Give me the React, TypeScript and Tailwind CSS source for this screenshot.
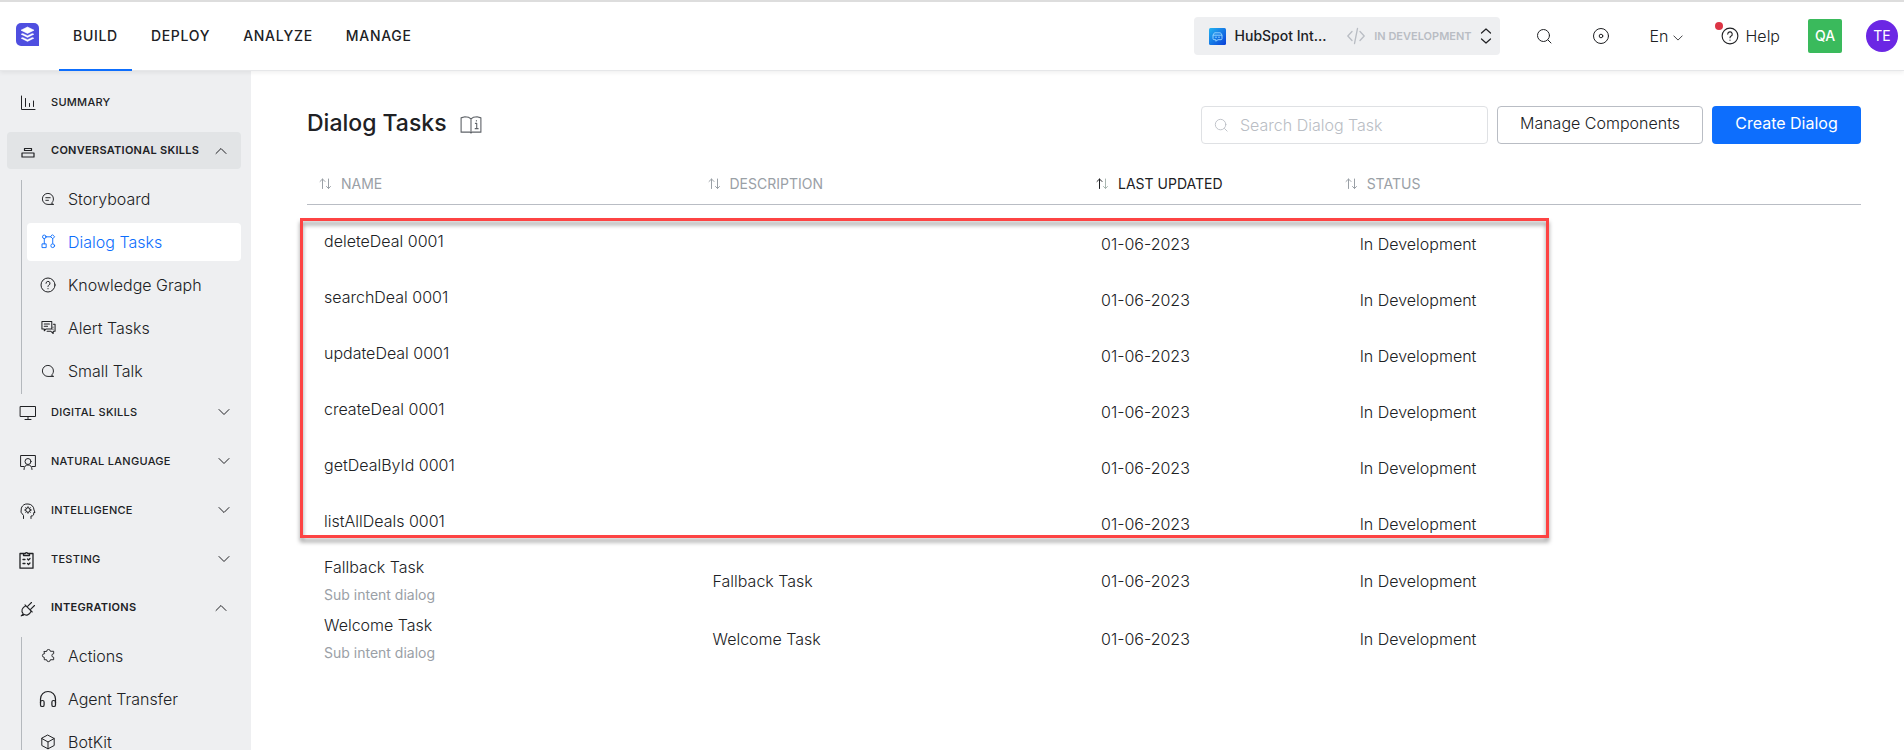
import React from "react";

type IconProps = { className?: string };

function Svg({
  className = "",
  box = 16,
  width = 1,
  children,
}: {
  className?: string;
  box?: number;
  width?: number;
  children: React.ReactNode;
}) {
  return (
    <svg
      className={`shrink-0 ${className}`}
      viewBox={`0 0 ${box} ${box}`}
      fill="none"
      stroke="currentColor"
      strokeWidth={width}
      strokeLinecap="round"
      strokeLinejoin="round"
      aria-hidden="true"
    >
      {children}
    </svg>
  );
}

const Logo = () => (
  <svg className="size-[23px] shrink-0" viewBox="0 0 23 23" aria-hidden="true">
    <path d="M5 0h13a5 5 0 0 1 5 5v17.500a.5.5 0 0 1-.5.500H5a5 5 0 0 1-5-5V5a5 5 0 0 1 5-5z" fill="#4f4fe0" />
    <path d="M11.500 4 18 7.200l-6.500 3.200L5 7.200z" fill="#fff" stroke="#fff" strokeWidth="0.6" strokeLinejoin="round" />
    <path d="m5 11.200 1.700-.8 4.800 2.300 4.800-2.300 1.700.8-6.500 3.200z" fill="#fff" stroke="#fff" strokeWidth="0.4" strokeLinejoin="round" />
    <path d="m5 15.200 1.700-.8 4.800 2.300 4.800-2.300 1.700.8-6.500 3.200z" fill="#fff" stroke="#fff" strokeWidth="0.4" strokeLinejoin="round" />
  </svg>
);

const SearchIcon = ({ className }: IconProps) => (
  <Svg className={className}>
    <circle cx="7.500" cy="7.500" r="6" />
    <path d="m12 12 3 3" />
  </Svg>
);

const ChevronIcon = ({ className }: IconProps) => (
  <Svg className={className} box={12}>
    <path d="m1 3.500 5 5 5-5" />
  </Svg>
);

const HelpIcon = ({ className }: IconProps) => (
  <Svg className={className}>
    <circle cx="8" cy="8" r="7" />
    <path d="M6 6.300a2 2 0 1 1 2.800 1.900c-.6.300-.8.600-.8 1.300M8 11.500v.3" />
  </Svg>
);

const SummaryIcon = () => (
  <Svg className="size-4">
    <path d="M1.500 1v13.500H15M5.500 3.500v8M9.500 8.500v3M13.500 6v5.500" />
  </Svg>
);

const SkillsIcon = () => (
  <Svg className="size-4" width={1.2}>
    <path d="M4.500 4.500h7v2h-7zM2 9h12v4H2z" />
  </Svg>
);

const MonitorIcon = () => (
  <Svg className="size-[18px]" box={18}>
    <path d="M1.500 2.500h15v10h-15zM9 12.500v2.500M6 15.500h6" />
  </Svg>
);

const LanguageIcon = () => (
  <Svg className="size-4">
    <path d="M4 12.500H.6V1.500h14.800v11H12" />
    <circle cx="8" cy="7.500" r="3" />
    <path d="M4 15.500c0-3 1.500-4.500 4-4.500s4 1.500 4 4.500" />
  </Svg>
);

const IntelligenceIcon = () => (
  <Svg className="size-4">
    <path d="M3.500 15.500v-3A6.400 6.400 0 0 1 8 1a6 6 0 0 1 6 6l1 2.500h-1.200c0 2.500-.3 3.500-2.800 3.500v2.500" />
    <circle cx="8" cy="7" r="2.300" />
    <path d="M8 3.700v1M8 9.300v1M4.700 7h1M10.300 7h1M5.700 4.700l.6.600M10.300 4.700l-.6.600M5.700 9.300l.6-.6M10.300 9.300l-.6-.6" />
  </Svg>
);

const TestingIcon = () => (
  <Svg className="-ml-[3px] size-[18px]" box={18} width={1.3}>
    <path d="M5.500 2.500H2v14.700h13V2.500h-3.500M5.500 4.500v-2h1.800a1.300 1.300 0 0 1 2.400 0h1.800v2z" />
    <path d="M5 8.500h2M5 12.500h2M9.500 8l1 1 1.500-1.500M9.500 12.500l1 1 1.500-1.500" />
  </Svg>
);

const PlugIcon = () => (
  <Svg className="size-4" width={1.1}>
    <path d="m5 3.800 7.200 7.200M6 4.800C1.800 6.500.8 10 3.200 12.800c2.800 2.400 6.300 1.400 8-2.800M3.200 12.800l-2 2M1.500 14.500h1.800M7.800 5.200l3.700-3.700M10.800 8.200l3.700-3.700" />
  </Svg>
);

const StoryboardIcon = () => (
  <Svg className="size-3.5" width={1.1}>
    <path d="M14 14.200H8A6.300 6.300 0 1 1 14.200 8c0 2-.8 3.500-2 4.600zM5.500 6.500h5M5.500 9.500h3" />
  </Svg>
);

const FlowIcon = () => (
  <Svg className="size-[15px]">
    <circle cx="3.500" cy="3" r="1.900" />
    <path d="m12.500 1 2 2-2 2-2-2zM5.500 3h5M3.500 5v5.500M12.500 5v5M1.500 10.500h4v4h-4z" />
    <circle cx="12.500" cy="12.500" r="2" />
  </Svg>
);

const AlertIcon = () => (
  <Svg className="size-[15px]" width={1.1}>
    <path d="M1 1.500h10.500v8H5.500L3.500 11.500v-2H1zM3.500 4.200h5.500M3.500 6.700h3.500" />
    <path d="M13.200 4.500H15v7.500h-2v2.500L10.500 12h-4" />
    <path d="M12.800 7.500v.1M12.800 9.700v.1" />
  </Svg>
);

const TalkIcon = () => (
  <Svg className="size-3.5" width={1.1}>
    <path d="M14 14.200H8A6.300 6.300 0 1 1 14.200 8c0 2-.8 3.500-2 4.600z" />
  </Svg>
);

const PuzzleIcon = () => (
  <Svg className="size-[15px]">
    <path d="M3.500 3.700H6a2 2 0 0 1 4-.2h3.500v2.600a1.900 1.900 0 0 0 0 3.800v2.600H10a2 2 0 0 1-4 0H3.500V10a2 2 0 0 1 0-4z" />
  </Svg>
);

const HeadsetIcon = () => (
  <Svg className="size-[18px]" box={18} width={1.2}>
    <path d="M1.500 13V9a7.500 7.500 0 0 1 15 0v4" />
    <rect x="1.500" y="10.500" width="3.600" height="6" rx="1.600" />
    <rect x="12.900" y="10.500" width="3.600" height="6" rx="1.600" />
  </Svg>
);

const CubeIcon = () => (
  <Svg className="size-4">
    <path d="m8 1.200 6.200 3.300v7L8 14.800l-6.200-3.300v-7zM1.800 4.500 8 8l6.200-3.500M8 8v6.800" />
  </Svg>
);

const BookIcon = () => (
  <Svg className="size-[22px] text-[#5f6368]" box={20}>
    <path d="M10 4.500C8.500 2.800 6.500 2.500 4.500 2.500L1 3.500v13h8l1 .8 1-.8h8v-13l-3.500-1c-2 0-4 .3-5.500 2v12.300" />
    <path d="M14 8.500h1.200v4.700M13.800 13.300h2.700M14.900 5.900v.4" />
  </Svg>
);

function SortIcon({ active }: { active?: boolean }) {
  return (
    <svg
      className="h-3 w-[13px] shrink-0"
      viewBox="0 0 13 12"
      fill="none"
      strokeLinecap="round"
      strokeLinejoin="round"
      aria-hidden="true"
    >
      <path d="M3.500 10.500v-9.500M1 3.500 3.500 1 6 3.500" stroke={active ? "#202124" : "#9aa0a6"} />
      <path d="M9.500 1v9.500M7.500 8.500l2 2 2-2" stroke={active ? "#a9b5b0" : "#9aa0a6"} />
    </svg>
  );
}

function Section({
  icon,
  label,
  open,
  collapsible = true,
  active,
}: {
  icon: React.ReactNode;
  label: string;
  open?: boolean;
  collapsible?: boolean;
  active?: boolean;
}) {
  return (
    <button
      type="button"
      aria-expanded={collapsible ? !!open : undefined}
      className={`flex h-[37px] w-full items-center rounded-[4px] pr-3.5 text-left ${active ? "bg-[#e2e4e6]" : ""}`}
    >
      <span className="flex w-11 shrink-0 justify-start pl-3">
        <span className="flex w-[18px] justify-center pt-0.5">{icon}</span>
      </span>
      <span
        className={`flex-1 text-[11px] leading-4 tracking-wide whitespace-nowrap ${
          open ? "pb-0.5 font-semibold" : "font-medium"
        }`}
      >
        {label}
      </span>
      {collapsible && <ChevronIcon className={open ? "size-3 rotate-180" : "-mr-[3px] size-3"} />}
    </button>
  );
}

function SubList({ items }: { items: { label: string; icon: React.ReactNode; active?: boolean }[] }) {
  return (
    <ul className="-mt-px ml-3.5 flex flex-col gap-[5px] border-l border-[#b4b8bd] pb-1 pl-[5px]">
      {items.map((item) => (
        <li key={item.label}>
          <a
            href="#"
            aria-current={item.active ? "page" : undefined}
            className={`flex h-[38px] items-center gap-[11px] rounded-[4px] pb-px pl-3 text-base leading-4 font-light ${
              item.active ? "bg-white text-[#0d6efd]" : ""
            }`}
          >
            <span className="flex w-[18px] justify-center">{item.icon}</span>
            <span>{item.label}</span>
          </a>
        </li>
      ))}
    </ul>
  );
}

const skills = [
  { label: "Storyboard", icon: <StoryboardIcon /> },
  { label: "Dialog Tasks", icon: <FlowIcon />, active: true },
  { label: "Knowledge Graph", icon: <HelpIcon className="size-4" /> },
  { label: "Alert Tasks", icon: <AlertIcon /> },
  { label: "Small Talk", icon: <TalkIcon /> },
];

const integrations = [
  { label: "Actions", icon: <PuzzleIcon /> },
  { label: "Agent Transfer", icon: <HeadsetIcon /> },
  { label: "BotKit", icon: <CubeIcon /> },
];

const tasks: { name: string; note?: string; description?: string }[] = [
  { name: "deleteDeal 0001" },
  { name: "searchDeal 0001" },
  { name: "updateDeal 0001" },
  { name: "createDeal 0001" },
  { name: "getDealById 0001" },
  { name: "listAllDeals 0001" },
  { name: "Fallback Task", note: "Sub intent dialog", description: "Fallback Task" },
  { name: "Welcome Task", note: "Sub intent dialog", description: "Welcome Task" },
];

const columns = [
  { label: "NAME", width: "w-1/4" },
  { label: "DESCRIPTION", width: "w-1/4" },
  { label: "LAST UPDATED", width: "w-[16%]", active: true },
  { label: "STATUS", width: "" },
];

function Header() {
  return (
    <header className="relative z-10 flex h-[71px] shrink-0 items-stretch border-t-2 border-b border-t-[#dddddd] border-b-[#e6e7e9] bg-white pr-1.5 pl-4 shadow-[0_2px_4px_rgba(0,0,0,0.06)]">
      <a href="#" aria-label="Home" className="mr-5 flex items-center pb-1">
        <Logo />
      </a>
      <nav className="-mb-px flex items-stretch gap-[5px]">
        {["BUILD", "DEPLOY", "ANALYZE", "MANAGE"].map((label, i) => (
          <a
            key={label}
            href="#"
            className={`flex items-center border-b-2 px-3.5 text-sm font-medium tracking-wider ${
              i === 0 ? "border-[#0d6efd]" : "border-transparent"
            }`}
          >
            {label}
          </a>
        ))}
      </nav>
      <div className="ml-auto flex items-center">
        <button type="button" className="flex h-[38px] w-[306px] items-center rounded-[4px] bg-[#eeeff1] pr-1.5 pl-[15px]">
          <svg className="size-[17px] shrink-0" viewBox="0 0 17 17" aria-hidden="true">
            <defs>
              <linearGradient id="bot" x1="0" y1="0" x2="1" y2="1">
                <stop offset="0" stopColor="#22b4f2" />
                <stop offset="1" stopColor="#0a3fd8" />
              </linearGradient>
            </defs>
            <rect width="17" height="17" rx="1.500" fill="url(#bot)" />
            <path d="M5.500 4.800h6L13 7v3.700a1 1 0 0 1-1 1H9l-2.200 1.500v-1.500H5a1 1 0 0 1-1-1V7z" fill="none" stroke="#8fd0ff" strokeLinejoin="round" />
            <path d="M4 7.200h9" stroke="#8fd0ff" />
            <circle cx="7" cy="9.300" r=".8" fill="#8fd0ff" />
            <circle cx="10" cy="9.300" r=".8" fill="#8fd0ff" />
          </svg>
          <span className="ml-[9px] text-sm font-medium">HubSpot Int...</span>
          <span className="ml-auto flex items-center text-[#b9bdc4]">
            <Svg className="size-[18px]" box={18} width={1.3}>
              <path d="M5 4.500.8 9 5 13.500M13 4.500 17.200 9 13 13.500M10.500 1.500l-3 15" />
            </Svg>
            <span className="ml-[9px] text-[11px] font-semibold">IN DEVELOPMENT</span>
          </span>
          <Svg className="ml-1.5 size-4" width={1.2}>
            <path d="m3.500 5 4.500-4 4.500 4M3.500 11l4.500 4 4.500-4" />
          </Svg>
        </button>
        <button type="button" aria-label="Search" className="ml-9">
          <SearchIcon className="size-4" />
        </button>
        <button type="button" aria-label="Walkthrough" className="ml-10">
          <Svg className="size-[18px]" box={18}>
            <circle cx="9" cy="9" r="7.500" />
            <circle cx="9" cy="9" r="1.800" />
          </Svg>
        </button>
        <button type="button" className="ml-10 flex items-center gap-1 text-base font-light">
          En
          <ChevronIcon className="mt-1 size-2.5" />
        </button>
        <button type="button" className="relative ml-[38px] flex items-center gap-[7px] text-base font-light">
          <HelpIcon className="size-[18px]" />
          Help
          <span className="absolute -top-0.5 -left-1.5 size-2 rounded-full bg-[#dc3545]" />
        </button>
        <button type="button" className="ml-7 size-[34px] rounded-[2px] bg-[#3aba5c] text-sm font-medium text-white">
          QA
        </button>
        <button type="button" className="ml-6 size-8 rounded-full bg-[#6b27e4] text-sm text-white">
          TE
        </button>
      </div>
    </header>
  );
}

export default function App() {
  return (
    <div className="flex h-screen flex-col overflow-hidden bg-white font-['Inter',sans-serif] text-[#202124]">
      <Header />
      <div className="flex min-h-0 flex-1">
        <aside className="w-[251px] shrink-0 overflow-hidden bg-[#eeeff1] pt-3 pr-2.5 pl-[7px]">
          <nav className="flex flex-col gap-3">
            <Section icon={<SummaryIcon />} label="SUMMARY" collapsible={false} />
            <Section icon={<SkillsIcon />} label="CONVERSATIONAL SKILLS" open active />
            <SubList items={skills} />
            <div className="-mt-[13px] flex flex-col gap-3">
              <Section icon={<MonitorIcon />} label="DIGITAL SKILLS" />
              <Section icon={<LanguageIcon />} label="NATURAL LANGUAGE" />
              <Section icon={<IntelligenceIcon />} label="INTELLIGENCE" />
              <Section icon={<TestingIcon />} label="TESTING" />
              <Section icon={<PlugIcon />} label="INTEGRATIONS" open />
            </div>
            <SubList items={integrations} />
          </nav>
        </aside>

        <main className="min-w-0 flex-1 pt-[35px] pr-[43px] pl-14">
          <div className="flex items-center gap-[9px]">
            <h1 className="mr-1 pb-1 text-[23px] leading-8 font-medium">Dialog Tasks</h1>
            <BookIcon />
            <label className="ml-auto flex h-[38px] w-[287px] items-center gap-3 rounded-[4px] border border-[#dfe1e4] px-3 text-[#b9bdc4]">
              <SearchIcon className="size-3.5" />
              <input
                type="search"
                aria-label="Search Dialog Task"
                placeholder="Search Dialog Task"
                className="min-w-0 flex-1 bg-transparent text-base font-light outline-none placeholder:text-[#b9bdc4]"
              />
            </label>
            <button type="button" className="h-[38px] w-[206px] rounded-[4px] border border-[#b9bdc4] pb-1 text-base font-light">
              Manage Components
            </button>
            <button type="button" className="h-[38px] w-[149px] rounded-[4px] bg-[#0d6efd] pb-1 text-base text-white">
              Create Dialog
            </button>
          </div>

          <div className="relative mt-5">
            <table className="w-full table-fixed border-collapse text-left">
              <thead>
                <tr className="h-10 border-b border-[#b9bdc4]">
                  {columns.map((col) => (
                    <th key={col.label} className={`p-0 pl-3 font-normal ${col.width}`}>
                      <button
                        type="button"
                        className={`flex items-center gap-[9px] text-sm ${col.active ? "" : "text-[#9aa0a6]"}`}
                      >
                        <SortIcon active={col.active} />
                        {col.label}
                      </button>
                    </th>
                  ))}
                </tr>
              </thead>
              <tbody className="text-base font-light before:block before:h-[11px]">
                {tasks.map((task) => (
                  <tr key={task.name} className={task.note ? "h-[58px]" : "h-14"}>
                    <td className={`p-0 pl-[17px] ${task.note ? "" : "pb-1.5"}`}>
                      <div className="leading-7">{task.name}</div>
                      {task.note && <div className="text-sm leading-7 font-normal text-[#9aa0a6]">{task.note}</div>}
                    </td>
                    <td className="p-0 pl-[17px]">{task.description}</td>
                    <td className="p-0 pl-[17px]">01-06-2023</td>
                    <td className="p-0 pl-[27px]">In Development</td>
                  </tr>
                ))}
              </tbody>
            </table>
            <div className="pointer-events-none absolute top-[54px] -left-[7px] h-80 w-[calc(80%+6px)] border-[3px] border-[#fd4343] drop-shadow-[0_4px_2px_rgba(0,0,0,0.4)]" />
          </div>
        </main>
      </div>
    </div>
  );
}
